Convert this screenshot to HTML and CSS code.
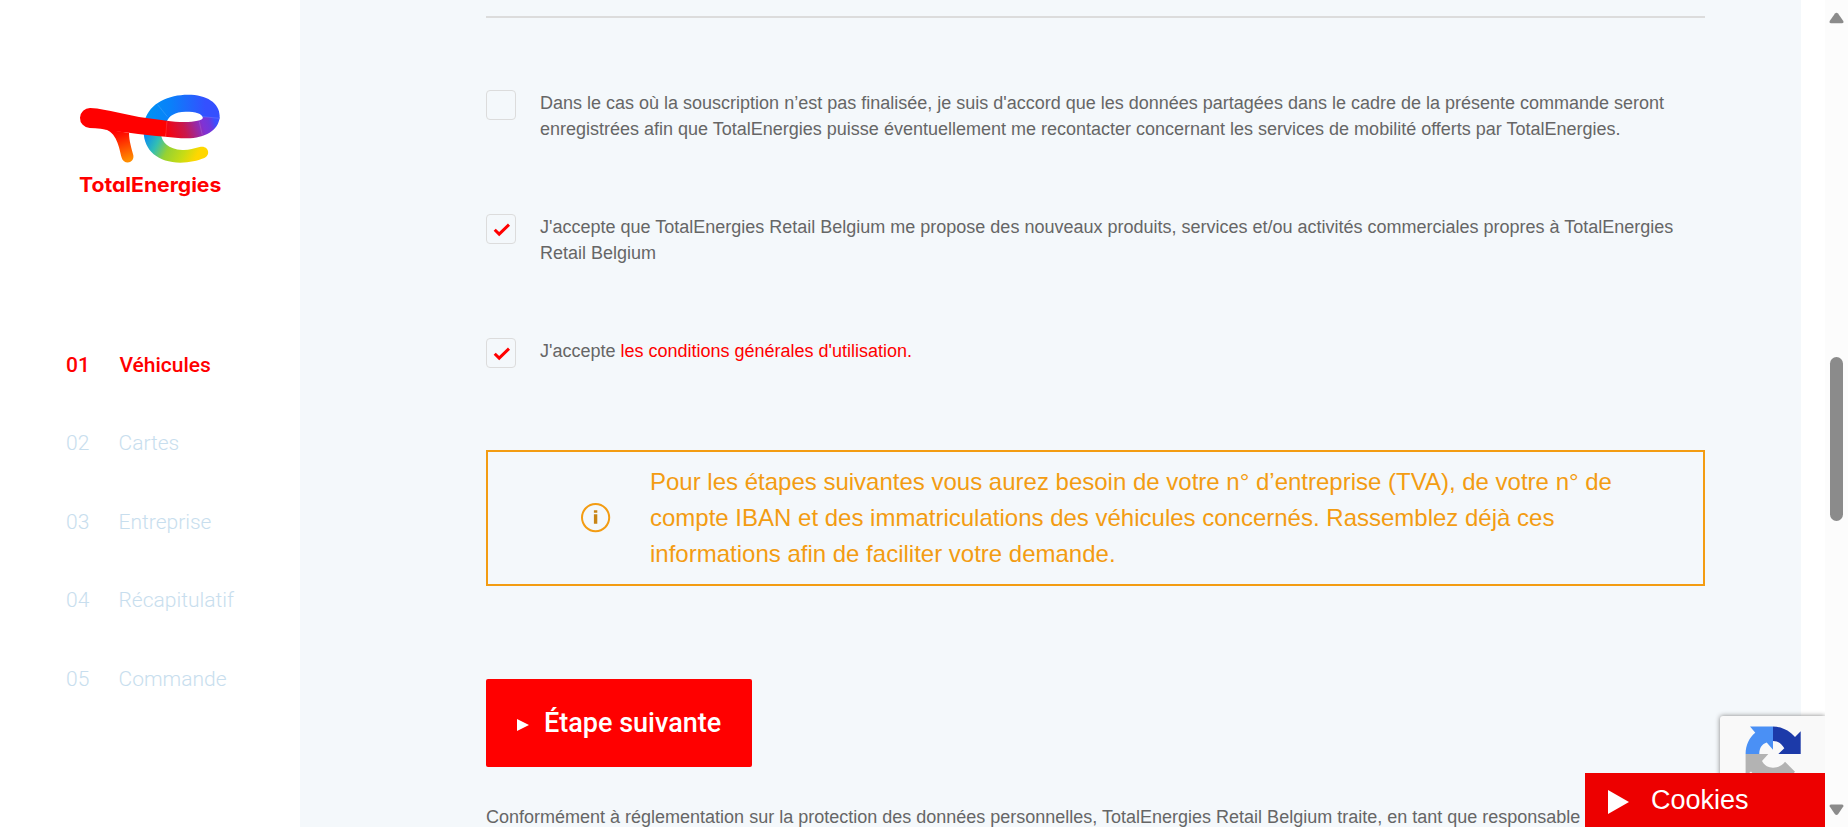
FILE: index.html
```html
<!DOCTYPE html>
<html lang="fr">
<head>
<meta charset="utf-8">
<title>TotalEnergies</title>
<link rel="stylesheet" href="styles.css">
</head>
<body>
<div class="page">
  <aside class="sidebar">
    <svg class="logo" viewBox="1 -2 540 390" width="180" height="130" role="img" aria-label="TotalEnergies">
      <defs>
        <linearGradient id="tee" gradientUnits="userSpaceOnUse" x1="170" y1="150" x2="200" y2="240"><stop offset="0" stop-color="#f00"/><stop offset=".2" stop-color="#ff1400"/><stop offset="1" stop-color="#ff8c00"/></linearGradient>
        <linearGradient id="ring" gradientUnits="userSpaceOnUse" x1="270" y1="80" x2="480" y2="80"><stop offset="0" stop-color="#0090f4"/><stop offset=".3" stop-color="#0a80fa"/><stop offset=".8" stop-color="#3450ff"/><stop offset="1" stop-color="#3450ff"/></linearGradient>
        <linearGradient id="bar" gradientUnits="userSpaceOnUse" x1="318" y1="160" x2="464" y2="112"><stop offset="0" stop-color="#fc0006"/><stop offset=".38" stop-color="#c8184c"/><stop offset=".75" stop-color="#8032d4"/><stop offset=".88" stop-color="#6e38dc"/><stop offset="1" stop-color="#3a50ff"/></linearGradient>
        <linearGradient id="tail" gradientUnits="userSpaceOnUse" x1="262" y1="155" x2="430" y2="240"><stop offset="0" stop-color="#0a8cf0"/><stop offset=".22" stop-color="#32beb4"/><stop offset=".42" stop-color="#96d232"/><stop offset=".68" stop-color="#c8dc14"/><stop offset=".88" stop-color="#ffd700"/></linearGradient>
      </defs>
      <path fill="url(#tail)" d="M252 152C252 210 296 246 362 246C390 246 414 240 432 233C456 223 446 192 420 199C402 204 386 209 368 208C325 205 307 186 304 160Z"/>
      <path fill="url(#ring)" d="M255 120C270 66 328 42 385 42C440 42 480 66 480 106L479 116L430 112C428 98 408 93 378 93C345 93 328 106 321 123Z"/>
      <path fill="url(#bar)" d="M320 120C364 127 430 126 430 110L480 110C476 150 436 173 382 173C357 173 337 170 317 168Z"/>
      <path fill="#f00" d="M92 82C145 85 202 105 260 112L322 120L318 168C280 165 245 161 208 156L155 151C135 145 112 142 90 142A30 30 0 0 1 92 82Z"/>
      <path fill="url(#tee)" d="M132 144C152 148 188 154 208 156C208 180 216 204 221 224C225 250 191 252 186 231C178 200 172 154 132 144Z"/>
      <path fill="none" stroke="#fff" stroke-opacity=".25" stroke-width="1.5" d="M294 72L323 108M430 108L479 113M419 123L428 164M322 120L318 168"/>
      <text class="logo-text" x="58" y="335" textLength="427" lengthAdjust="spacingAndGlyphs">TotalEnergies</text>
    </svg>
    <nav class="steps">
      <div class="step active"><span class="num">01</span><span>Véhicules</span></div>
      <div class="step"><span class="num">02</span><span>Cartes</span></div>
      <div class="step"><span class="num">03</span><span>Entreprise</span></div>
      <div class="step"><span class="num">04</span><span>Récapitulatif</span></div>
      <div class="step"><span class="num">05</span><span>Commande</span></div>
    </nav>
  </aside>
  <main class="main">
    <div class="rule"></div>
    <div class="consents">
      <div class="consent"><span class="box"></span><p>Dans le cas où la souscription n’est pas finalisée, je suis d'accord que les données partagées dans le cadre de la présente commande seront<br>enregistrées afin que TotalEnergies puisse éventuellement me recontacter concernant les services de mobilité offerts par TotalEnergies.</p></div>
      <div class="consent"><span class="box"><svg width="28" height="28" viewBox="0 0 28 28"><path d="M7.7 14.7L12.2 19.1L22 9.7"/></svg></span><p>J'accepte que TotalEnergies Retail Belgium me propose des nouveaux produits, services et/ou activités commerciales propres à TotalEnergies<br>Retail Belgium</p></div>
      <div class="consent"><span class="box"><svg width="28" height="28" viewBox="0 0 28 28"><path d="M7.7 14.7L12.2 19.1L22 9.7"/></svg></span><p>J'accepte <a>les conditions générales d'utilisation.</a></p></div>
    </div>
    <div class="notice">
      <svg class="info" width="30" height="30" viewBox="0 0 30 30"><circle cx="14.6" cy="14.6" r="13.6" fill="none" stroke="#f39c12" stroke-width="2"/><path d="M12.9 7.3h3.4v2.5h-3.4zM12.9 11.3h3.4v9.5h-3.4z" fill="#c88414"/></svg>
      <p>Pour les étapes suivantes vous aurez besoin de votre n° d’entreprise (TVA), de votre n° de<br>compte IBAN et des immatriculations des véhicules concernés. Rassemblez déjà ces<br>informations afin de faciliter votre demande.</p>
    </div>
    <div class="next"><svg width="12" height="12" viewBox="0 0 12 12"><path d="M0 0L12 6L0 12z" fill="#fff"/></svg><span>Étape suivante</span></div>
    <p class="legal">Conformément à réglementation sur la protection des données personnelles, TotalEnergies Retail Belgium traite, en tant que responsable</p>
  </main>
  <div class="scrollbar">
    <svg width="15" height="12" viewBox="0 0 15 12"><path d="M6 1.5Q7.5 0 9 1.5L14.3 9Q15 11.2 13 11.3H2Q0 11.2 .7 9z" fill="#8b8b8b"/></svg>
    <span class="thumb"></span>
    <svg width="15" height="12" viewBox="0 0 15 12"><path d="M6 10.2Q7.5 11.7 9 10.2L14.3 2.5Q15 .5 13 .4H2Q0 .5 .7 2.5z" fill="#8b8b8b"/></svg>
  </div>
</div>
<div class="captcha">
  <svg width="56" height="56" viewBox="0 0 56 56">
    <path fill="#1c3aa9" d="M55.7 28V5.3L50 11C44.7 4.8 36.8 .5 28 .5V15C33 15 36.5 17.5 39.3 22.3L33.3 28Z"/>
    <path fill="#4a90f5" d="M28 .5H5L10.3 6.7C4.5 11 .6 19 .6 28H14.3C14.3 22 17 18 21.7 16.5L28 23.7Z"/>
    <path fill="#b3b3b3" d="M.6 28V50L6 45.5C11 52 19 56 28 56C37 56 45 52 50 45.7L40 35.7C37 39.7 33 41.7 28 41.7C23 41.7 19 39 17 35L23.3 28Z"/>
  </svg>
</div>
<div class="cookies"><svg width="21" height="24" viewBox="0 0 21 24"><path d="M0 0L21 12L0 24z" fill="#fff"/></svg><span>Cookies</span></div>
</body>
</html>
```
FILE: styles.css
```css
* { box-sizing: border-box; }
body { margin: 0; height: 827px; overflow: hidden; background: #fff; font-family: "Liberation Sans", Arial, sans-serif; color: #666; }
p { margin: 0; white-space: nowrap; }
svg { display: block; flex: none; }
.page { display: flex; height: 827px; overflow: hidden; }
.sidebar { width: 300px; padding: 80px 0 0 60px; flex: none; }
.logo-text { font: 700 61px Inter, sans-serif; font-feature-settings: "cv11", "ss03"; fill: #f00; }
.steps { margin: 115.7px 0 0 6px; font: 300 21px Roboto, sans-serif; color: #c8deee; }
.step { display: flex; height: 78.5px; line-height: 79px; }
.num { width: 52.5px; }
.step.active { color: #f00; font-weight: 500; }
.step.active .num { width: 53.5px; }
.main { width: 1501px; flex: none; background: #f4f8fb; padding: 16px 96px 0 186px; }
.rule { height: 2px; background: #dcdcdc; }
.consents { display: flex; flex-direction: column; padding-top: 72px; }
.consent { display: flex; gap: 24px; height: 124px; font-size: 18px; line-height: 26px; }
.consent a { color: #f00; }
.box { width: 30px; height: 30px; flex: none; border: 1px solid #dcdcdc; border-radius: 4px; }
.box path { fill: none; stroke: #f00; stroke-width: 3; }
.notice { display: flex; align-items: center; height: 136px; margin-top: -12px; padding-left: 93px; gap: 39px; border: 2px solid #f39c12; color: #f39c12; font-size: 24px; line-height: 36px; }
.next { display: flex; align-items: center; width: 266px; height: 88px; margin-top: 93px; padding-left: 31px; gap: 15px; border-radius: 2px; background: #f00; color: #fff; font: 500 27px Roboto, sans-serif; white-space: nowrap; }
.next svg { margin-top: 4px; }
.legal { margin-top: 37px; font-size: 18px; line-height: 26px; }
.scrollbar { width: 23px; margin-left: 24px; flex: none; background: #fcfcfc; display: flex; flex-direction: column; align-items: center; padding-top: 12px; }
.thumb { width: 13px; height: 164px; margin: 333px 0 283px; border-radius: 7px; background: #8b8b8b; flex: none; }
.captcha { position: absolute; left: 1720px; top: 716px; width: 105px; height: 78px; padding: 10px 0 0 25px; background: #f9f9f9; border-radius: 3px 0 0 3px; box-shadow: 0 0 5px gray; clip-path: inset(-8px 0 0 -8px); }
.cookies { position: absolute; left: 1585px; top: 773px; width: 240px; height: 54px; padding-left: 23px; display: flex; align-items: center; gap: 22px; background: #ed0000; color: #fff; font-size: 27px; }
.cookies svg { margin-top: 4px; }
```
